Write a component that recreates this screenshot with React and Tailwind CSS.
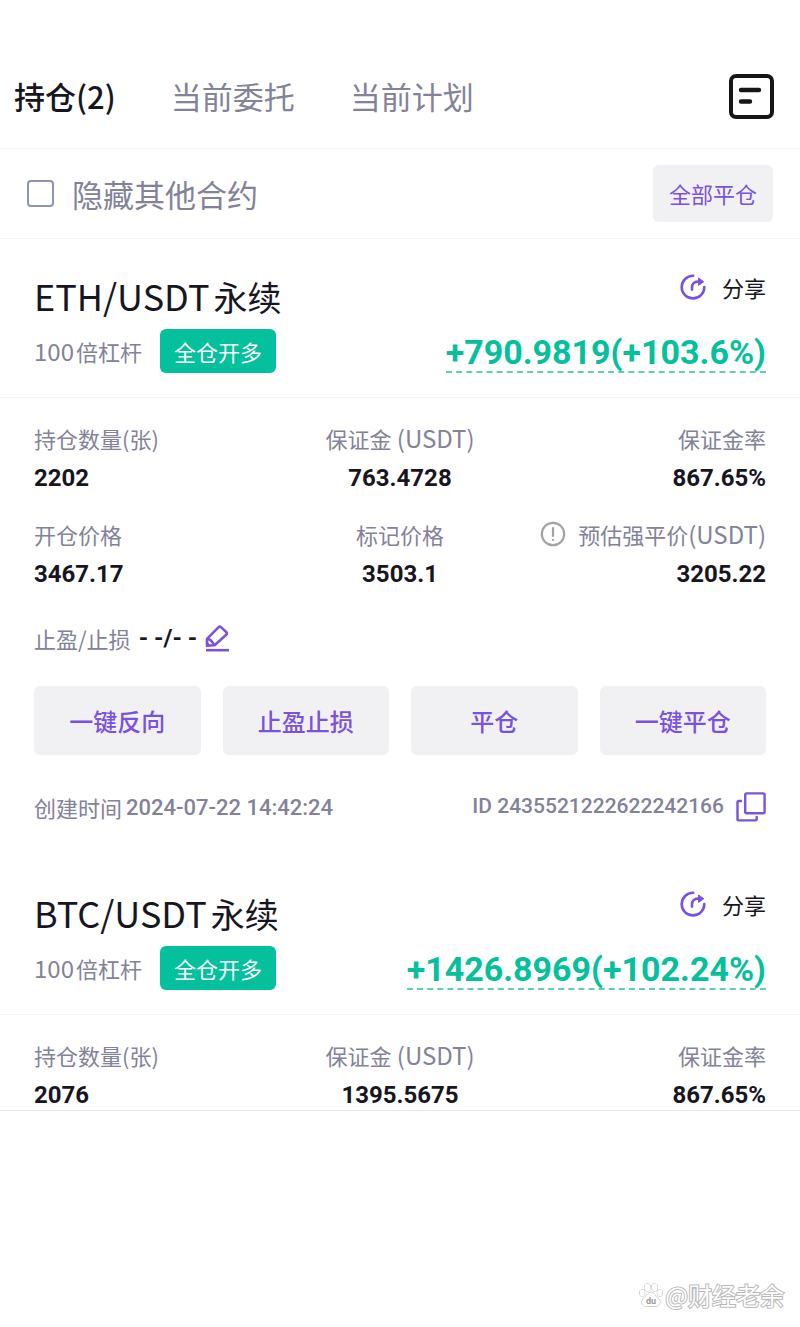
import { useState } from 'react'

const POSITIONS = [
  {
    id: '2435521222622242166',
    pair: 'ETH/USDT',
    leverage: 100,
    profit: '+790.9819(+103.6%)',
    amount: '2202',
    margin: '763.4728',
    marginRate: '867.65%',
    prices: { open: '3467.17', mark: '3503.1', liquidation: '3205.22' },
    createdAt: '2024-07-22 14:42:24',
  },
  {
    id: 'btc',
    pair: 'BTC/USDT',
    leverage: 100,
    profit: '+1426.8969(+102.24%)',
    amount: '2076',
    margin: '1395.5675',
    marginRate: '867.65%',
  },
]

const TABS = ['持仓(2)', '当前委托', '当前计划']
const ACTIONS = ['一键反向', '止盈止损', '平仓', '一键平仓']

function OrdersIcon() {
  return (
    <svg width="46" height="46" viewBox="0 0 46 46" fill="none" stroke="#16151a" strokeWidth="4" strokeLinecap="round">
      <rect x="3" y="3" width="41" height="41" rx="5" />
      <path d="M13 17h18M13 28.500h9" strokeWidth="4.4" />
    </svg>
  )
}

function ShareIcon() {
  return (
    <svg width="26" height="26" viewBox="0 0 26 26" fill="none" stroke="#7a52de" strokeWidth="2.6" strokeLinecap="round">
      <path d="M13.2 1.8A11.3 11.3 0 1 0 24.3 13" />
      <path d="M12 15.600v-2.200c0-3.800 2.200-5.800 6-5.800h1.500" />
      <path d="M18.800 4.200l5 3.500-5 3.500z" fill="#7a52de" strokeWidth="1" strokeLinejoin="round" />
    </svg>
  )
}

function EditIcon() {
  return (
    <svg width="25" height="27" viewBox="0 0 25 27" fill="none" stroke="#7a52de" strokeWidth="2.6" strokeLinejoin="round">
      <path d="M2 20.800v-7L13.400 2.400a2 2 0 0 1 2.800 0l5 4.600a2 2 0 0 1 0 2.800L9.600 20.200z" />
      <path d="M2.400 13.600l3.400 1.600 3.800 5" />
      <path d="M2 16.500l4 4.200H2z" fill="#7a52de" stroke="none" />
      <path d="M1 25.200h23" />
    </svg>
  )
}

function CopyIcon() {
  return (
    <svg width="30" height="30" viewBox="0 0 30 30" fill="none" stroke="#7a52de" strokeWidth="2.4" strokeLinecap="round" strokeLinejoin="round">
      <rect x="9.2" y="1.4" width="19.4" height="19.8" rx="1.5" />
      <path d="M5 9H2.800A1.300 1.300 0 0 0 1.500 10.300v16.800a1.300 1.300 0 0 0 1.300 1.300h16.600a1.300 1.300 0 0 0 1.300-1.300V25" />
    </svg>
  )
}

function InfoIcon() {
  return (
    <svg width="26" height="26" viewBox="0 0 26 26" fill="none" stroke="#a3a3a6" strokeWidth="2.2" strokeLinecap="round">
      <circle cx="13" cy="13" r="11.2" />
      <path d="M13 7v8M13 18.800v.2" />
    </svg>
  )
}

function PawIcon() {
  return (
    <svg width="24" height="24" viewBox="0 0 24 24" fill="#fff" stroke="#a8a8a8" strokeWidth="1">
      <ellipse cx="8.4" cy="4.4" rx="3" ry="3.8" />
      <ellipse cx="15.6" cy="4.4" rx="3" ry="3.8" />
      <ellipse cx="3.2" cy="10" rx="2.6" ry="3.4" />
      <ellipse cx="20.8" cy="10" rx="2.6" ry="3.4" />
      <path d="M12 9.200c-2.600 0-3.600 2.400-5.400 4.200C4.600 15.200 3 16.600 3 19.200 3 22 5 23.400 7.400 23.400c1.800 0 2.800-.4 4.600-.4s2.800.4 4.600.4c2.400 0 4.400-1.400 4.400-4.200 0-2.600-1.600-4-3.600-5.800C15.600 11.600 14.600 9.200 12 9.200z" />
      <text x="12" y="20.500" textAnchor="middle" fontSize="9" fontWeight="700" fontFamily="Roboto, sans-serif" fill="#999" stroke="none">du</text>
    </svg>
  )
}

const ALIGN = {
  left: 'items-start',
  center: 'items-center',
  right: 'items-end',
}

function Metric({ label, unit, value, align = 'left', info = false }) {
  return (
    <div className={`flex flex-col gap-[10px] whitespace-nowrap ${ALIGN[align]}`}>
      <dt className="flex items-center gap-3 text-[22px] leading-[30px] text-[#82829a]">
        {info ? <InfoIcon /> : null}
        <span>
          {label}
          {unit ? <span className="text-[24px]">{unit}</span> : null}
        </span>
      </dt>
      <dd className="font-[Roboto,sans-serif] text-[24px] leading-[30px] font-bold text-[#17161f]">{value}</dd>
    </div>
  )
}

function Position({ data }) {
  return (
    <article>
      <div className="flex justify-between border-b border-[#f3f3f5] px-[34px] pt-[34px] pb-6">
        <div className="flex flex-col gap-[10px]">
          <h2 className="flex items-baseline gap-1 text-[34px] leading-[44px] text-[#17161f]">
            <span className="text-[36px]">{data.pair}</span>
            永续
          </h2>
          <div className="flex items-center gap-[18px]">
            <span className="flex items-baseline gap-[2px] text-[22px] leading-[40px] text-[#82829a]">
              <span className="text-[24px]">{data.leverage}</span>
              倍杠杆
            </span>
            <span className="rounded-md bg-[#04c09c] px-[14px] text-[22px] leading-[44px] text-white">全仓开多</span>
          </div>
        </div>
        <div className="flex flex-col items-end justify-between">
          <button type="button" className="flex items-center gap-4 text-[22px] leading-[28px] text-[#17161f]">
            <ShareIcon />
            分享
          </button>
          <button
            type="button"
            className="border-b-2 border-dashed border-[#5fcfb6] font-[Roboto,sans-serif] text-[34px] leading-[38px] font-bold text-[#04c09c]"
          >
            {data.profit}
          </button>
        </div>
      </div>

      <dl className="grid grid-cols-3 gap-y-[26px] px-[34px] pt-[25px]">
        <Metric label="持仓数量(张)" value={data.amount} />
        <Metric label="保证金" unit=" (USDT)" value={data.margin} align="center" />
        <Metric label="保证金率" value={data.marginRate} align="right" />
        {data.prices ? (
          <>
            <Metric label="开仓价格" value={data.prices.open} />
            <Metric label="标记价格" value={data.prices.mark} align="center" />
            <Metric label="预估强平价" unit="(USDT)" value={data.prices.liquidation} align="right" info />
          </>
        ) : null}
      </dl>

      {data.prices ? (
        <div className="px-[34px] pt-[29px] pb-[29px]">
          <div className="flex h-10 items-center gap-2 text-[22px] text-[#82829a]">
            <span>止盈/止损</span>
            <span className="font-[Roboto,sans-serif] text-[24px] font-bold text-[#17161f]">- -/- -</span>
            <button type="button" aria-label="编辑止盈止损">
              <EditIcon />
            </button>
          </div>
          <div className="mt-7 grid grid-cols-4 gap-[22px]">
            {ACTIONS.map(a => (
              <button key={a} type="button" className="h-[69px] rounded-md bg-[#f1f1f4] text-[24px] font-medium text-[#7a52de]">
                {a}
              </button>
            ))}
          </div>
          <div className="mt-8 flex h-10 items-center justify-between text-[22px] text-[#82829a]">
            <div className="flex items-center gap-1">
              创建时间
              <time className="font-[Roboto,sans-serif] font-medium">{data.createdAt}</time>
            </div>
            <div className="flex items-center gap-3">
              <span className="font-[Roboto,sans-serif] text-[21px] font-medium">ID {data.id}</span>
              <button type="button" aria-label="复制 ID">
                <CopyIcon />
              </button>
            </div>
          </div>
        </div>
      ) : null}
    </article>
  )
}

export default function App() {
  const [tab, setTab] = useState(0)
  const [hideOthers, setHideOthers] = useState(false)

  return (
    <div className="flex min-h-screen flex-col bg-white font-['Noto_Sans_CJK_SC',sans-serif]">
      <header className="flex items-center justify-between border-b border-[#f3f3f5] pt-[46px] pr-[26px] pb-[2px] pl-[14px]">
        <nav className="flex gap-[55px]">
          {TABS.map((t, i) => (
            <button
              key={t}
              type="button"
              onClick={() => setTab(i)}
              className={`text-[31px] leading-[100px] ${i === tab ? 'font-medium text-[#17161f]' : 'text-[#82829a]'}`}
            >
              {t}
            </button>
          ))}
        </nav>
        <button type="button" aria-label="历史委托">
          <OrdersIcon />
        </button>
      </header>

      <div className="flex items-center justify-between border-b border-[#f3f3f5] py-4 pr-[27px] pl-[27px]">
        <label className="flex items-center gap-[18px] text-[31px] leading-[44px] text-[#82829a]">
          <input
            type="checkbox"
            checked={hideOthers}
            onChange={e => setHideOthers(e.target.checked)}
            className="size-[27px] appearance-none rounded border-2 border-[#8f93b5] checked:bg-[#7a52de]"
          />
          隐藏其他合约
        </label>
        <button type="button" className="rounded-md bg-[#f1f1f4] px-4 text-[22px] leading-[57px] text-[#7a52de]">
          全部平仓
        </button>
      </div>

      <main className="border-b border-[#e6e6e8]">
        {POSITIONS.map(p => <Position key={p.id} data={p} />)}
      </main>

      <footer className="mt-auto flex items-center justify-end gap-[2px] pr-4 pb-4 text-[24px] leading-[32px] text-white [-webkit-text-stroke:2px_#b8b8b8] [paint-order:stroke_fill]">
        <PawIcon />
        @财经老余
      </footer>
    </div>
  )
}
